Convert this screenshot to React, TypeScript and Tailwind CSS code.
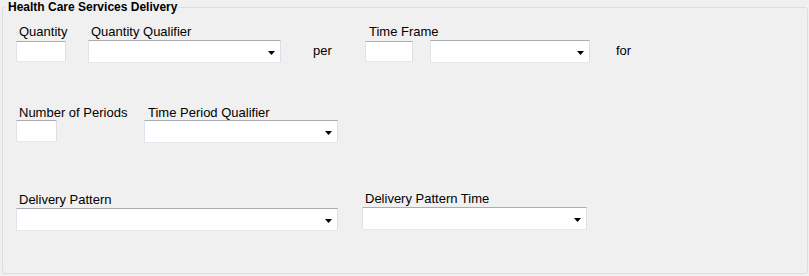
import React from "react";

const Arrow = () => (
  <svg width="7" height="4" viewBox="0 0 7 4" className="block">
    <polygon points="0,0 7,0 3.5,4" fill="#000" />
  </svg>
);

const TextBox = ({ w, h }: { w: string; h: string }) => (
  <div
    className={`${w} ${h} bg-white border border-t-[#abadb3] border-l-[#e2e3ea] border-r-[#dbdfe6] border-b-[#e3e9ef] rounded-[1px]`}
  />
);

const Combo = ({ className = "" }: { className?: string }) => (
  <div
    className={`h-[23px] bg-white border border-t-[#abadb3] border-l-[#e2e3ea] border-r-[#dbdfe6] border-b-[#e3e9ef] rounded-[1px] flex items-center justify-end pr-[5px] pt-[2px] ${className}`}
  >
    <Arrow />
  </div>
);

const Label = ({ children, className = "" }: { children: React.ReactNode; className?: string }) => (
  <div className={`h-[15px] leading-[15px] text-[13px] whitespace-nowrap text-black ${className}`}>{children}</div>
);

export default function App() {
  return (
    <div className="w-[809px] h-[276px] bg-[#f0f0f0] font-['Liberation_Sans',Arial,sans-serif] overflow-hidden">
      <fieldset className="ml-[2px] w-[806px] h-[274px] border border-[#d5dfe5] rounded-[3px] px-[3px] pb-0 pt-0">
        <legend className="px-[2px] text-[12px] leading-[14px] font-bold text-black">
          Health Care Services Delivery
        </legend>

        {/* Row 1 */}
        <div className="flex items-start mt-[10px]">
          <div className="ml-[10px] w-[50px] flex flex-col">
            <Label className="pl-[3px]">Quantity</Label>
            <div className="mt-[2px]">
              <TextBox w="w-[50px]" h="h-[21px]" />
            </div>
          </div>
          <div className="ml-[22px] w-[193px] flex flex-col">
            <Label className="pl-[3px]">Quantity Qualifier</Label>
            <Combo className="mt-[1px] w-[193px]" />
          </div>
          <div className="ml-[32px] w-[20px] mt-[19px]">
            <Label>per</Label>
          </div>
          <div className="ml-[32px] w-[48px] flex flex-col">
            <Label className="pl-[4px]">Time Frame</Label>
            <div className="mt-[2px]">
              <TextBox w="w-[48px]" h="h-[21px]" />
            </div>
          </div>
          <div className="ml-[17px] w-[160px] mt-[16px]">
            <Combo className="w-[160px]" />
          </div>
          <div className="ml-[26px] mt-[19px]">
            <Label>for</Label>
          </div>
        </div>

        {/* Row 2 */}
        <div className="flex items-start mt-[42px]">
          <div className="ml-[10px] w-[128px] flex flex-col">
            <Label className="pl-[3px]">Number of Periods</Label>
            <TextBox w="w-[41px]" h="h-[22px]" />
          </div>
          <div className="w-[194px] flex flex-col">
            <Label className="pl-[4px]">Time Period Qualifier</Label>
            <Combo className="w-[194px]" />
          </div>
        </div>

        {/* Row 3 */}
        <div className="flex items-start mt-[48px]">
          <div className="ml-[10px] w-[322px] flex flex-col mt-[1px]">
            <Label className="pl-[3px]">Delivery Pattern</Label>
            <Combo className="mt-[1px] w-[322px]" />
          </div>
          <div className="ml-[24px] w-[225px] flex flex-col">
            <Label className="pl-[3px]">Delivery Pattern Time</Label>
            <Combo className="mt-[1px] w-[225px]" />
          </div>
        </div>
      </fieldset>
    </div>
  );
}
